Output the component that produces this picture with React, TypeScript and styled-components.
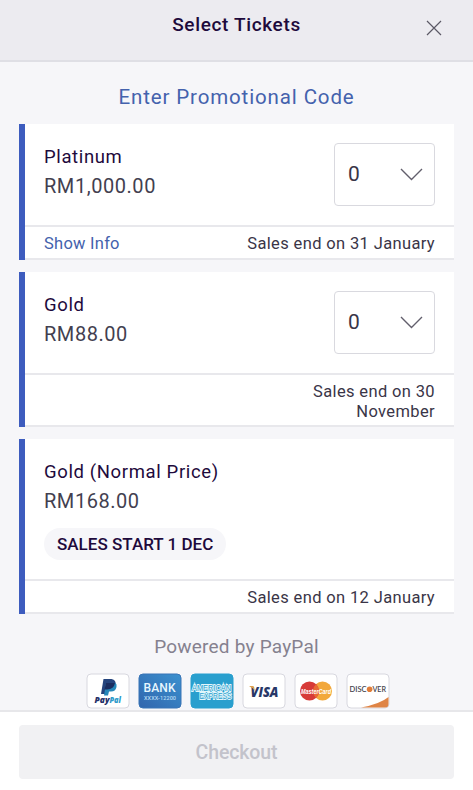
import React from "react";
import styled, { createGlobalStyle } from "styled-components";

const GlobalStyle = createGlobalStyle`
  * { box-sizing: border-box; }
  body { margin: 0; background: #f6f6f9; font-family: Roboto, "Liberation Sans", sans-serif; color: #3a3547; }
  button { font-family: inherit; border: 0; padding: 0; background: none; }
`;

const Screen = styled.div`
  width: 473px;
  height: 790px;
  display: flex;
  flex-direction: column;
  overflow: hidden;
  background: #f6f6f9;
`;

const Header = styled.header`
  height: 62px;
  flex: none;
  display: grid;
  grid-template-columns: 48px 1fr 48px;
  padding: 0 14px;
  background: #ecebf0;
  border-bottom: 2px solid #dfdfe5;
`;

const Title = styled.h1`
  margin: 0;
  text-align: center;
  font-size: 19px;
  font-weight: 500;
  line-height: 50px;
  letter-spacing: 0.65px;
  color: #1e0a3c;
`;

const CloseButton = styled.button`
  display: flex;
  justify-content: flex-end;
  padding: 20px 17px 0 0;
  grid-column: 3;
`;

const Content = styled.main`
  flex: 1;
  min-height: 0;
  padding: 0 19px;
  display: flex;
  flex-direction: column;
`;

const PromoLink = styled.button`
  height: 62px;
  padding-top: 8px;
  flex: none;
  font-size: 20.5px;
  letter-spacing: 0.87px;
  color: #4462ad;
`;

const Tickets = styled.div`
  display: flex;
  flex-direction: column;
  gap: 12px;
`;

const Card = styled.section`
  background: #fff;
  border-left: 6.5px solid #3d5cbe;
`;

const CardBody = styled.div<{ $height: number }>`
  height: ${(p) => p.$height}px;
  padding: 19px 19px 0 19px;
  display: flex;
  justify-content: space-between;
  align-items: flex-start;
`;

const Name = styled.h2`
  margin: 0;
  font-size: 18.5px;
  font-weight: 400;
  line-height: 28px;
  letter-spacing: 0.63px;
  color: #1e0a3c;
`;

const Price = styled.div`
  font-size: 20px;
  line-height: 30px;
  letter-spacing: 0.55px;
  color: #433f50;
`;

const Badge = styled.div`
  display: inline-block;
  height: 32px;
  margin-top: 12px;
  padding: 0 13px;
  border-radius: 16px;
  background: #f6f6f9;
  font-size: 17px;
  font-weight: 500;
  line-height: 33px;
  letter-spacing: 0.02px;
  color: #1e0a3c;
`;

const Quantity = styled.button`
  width: 101px;
  height: 63px;
  display: flex;
  align-items: center;
  justify-content: space-between;
  padding: 0 11px 1px 13px;
  border: 1.5px solid #d9d9df;
  border-radius: 4px;
  font-size: 21px;
  color: #3a3547;
`;

const CardFooter = styled.div<{ $height: number }>`
  height: ${(p) => p.$height}px;
  display: flex;
  justify-content: space-between;
  align-items: flex-start;
  padding: 7px 19px 0 19px;
  border-top: 2px solid #e8e8ec;
  border-bottom: 2px solid #e8e8ec;
  font-size: 16.5px;
  line-height: 20px;
  letter-spacing: 0.36px;
`;

const InfoLink = styled.a`
  letter-spacing: 0.25px;
  color: #4462ad;
`;

const SaleEnd = styled.div`
  max-width: 194px;
  margin-left: auto;
  text-align: right;
`;

const Powered = styled.p`
  margin: 0;
  padding-top: 21px;
  text-align: center;
  font-size: 19px;
  line-height: 24px;
  letter-spacing: 0.22px;
  color: #85818f;
`;

const Payments = styled.div`
  display: flex;
  justify-content: center;
  gap: 8px;
  padding: 14px 0 0 2px;
`;

const Logo = styled.svg`
  width: 44px;
  height: 36px;
  flex: none;
`;

const Footer = styled.footer`
  height: 80px;
  flex: none;
  padding: 13px 19px 0;
  background: #fff;
  border-top: 2px solid #e7e7ea;
`;

const Checkout = styled.button`
  width: 100%;
  height: 54px;
  border-radius: 4px;
  background: #f1f1f3;
  color: #c3c3cb;
  font-size: 19.5px;
  font-weight: 500;
  letter-spacing: -0.1px;
`;

const Picker = () => (
  <Quantity>
    0
    <svg width="23" height="14" viewBox="0 0 23 14" fill="none" stroke="#625f6c" strokeWidth="1.4">
      <path d="M1 2 11.5 12.5 22 2" />
    </svg>
  </Quantity>
);

interface TicketProps {
  name: string;
  price: string;
  ends: string;
  badge?: string;
  info?: boolean;
  bodyHeight: number;
  footerHeight: number;
}

const Ticket = ({ name, price, ends, badge, info, bodyHeight, footerHeight }: TicketProps) => (
  <Card>
    <CardBody $height={bodyHeight}>
      <div>
        <Name>{name}</Name>
        <Price>{price}</Price>
        {badge && <Badge>{badge}</Badge>}
      </div>
      {!badge && <Picker />}
    </CardBody>
    <CardFooter $height={footerHeight}>
      {info && <InfoLink>Show Info</InfoLink>}
      <SaleEnd>{ends}</SaleEnd>
    </CardFooter>
  </Card>
);

const tickets: TicketProps[] = [
  { name: "Platinum", price: "RM1,000.00", ends: "Sales end on 31 January", info: true, bodyHeight: 101, footerHeight: 35 },
  { name: "Gold", price: "RM88.00", ends: "Sales end on 30 November", bodyHeight: 100.5, footerHeight: 54.5 },
  { name: "Gold (Normal Price)", price: "RM168.00", ends: "Sales end on 12 January", badge: "SALES START 1 DEC", bodyHeight: 140, footerHeight: 35 },
];

const Plate = ({ fill = "#fff", stroke = "#d8d8df" }: { fill?: string; stroke?: string }) => (
  <rect x="1" y="1" width="42" height="34" rx="4" fill={fill} stroke={stroke} />
);

const PayPal = () => (
  <Logo viewBox="0 0 44 36">
    <Plate />
    <path d="M17.500 6h8q5 1 4 6-1 5-7 5h-2l-1 4h-4.500z" fill="#25447d" />
    <path d="M20 10h9.500q1.500 1 1 4-1 4.500-5.500 4.500h-2l-1 4h-4z" fill="#2687b9" />
    <path d="M20 10h9q-1 6-8 6.500h-2.500z" fill="#1b2d60" />
    <text x="8.5" y="30" fontFamily="Open Sans" fontStyle="italic" fontWeight="800" fontSize="8" textLength="15" lengthAdjust="spacingAndGlyphs" fill="#253068">Pay</text>
    <text x="23.5" y="30" fontFamily="Open Sans" fontStyle="italic" fontWeight="800" fontSize="8" textLength="11.5" lengthAdjust="spacingAndGlyphs" fill="#2c9aca">Pal</text>
  </Logo>
);

const Bank = () => (
  <Logo viewBox="0 0 44 36">
    <defs>
      <linearGradient id="bank" x1="0" y1="1" x2="1" y2="0">
        <stop stopColor="#3165ad" />
        <stop offset="1" stopColor="#3b91cf" />
      </linearGradient>
    </defs>
    <Plate fill="url(#bank)" stroke="#3874b6" />
    <text x="5.5" y="18.5" fontFamily="Roboto" fontWeight="500" fontSize="12" textLength="32" fill="#e7f7ff">BANK</text>
    <text x="6" y="27" fontFamily="Roboto" fontWeight="500" fontSize="5.5" textLength="32" fill="#b8dcf5">XXXX-12200</text>
  </Logo>
);

const Amex = () => (
  <Logo viewBox="0 0 44 36">
    <Plate fill="#299fce" stroke="#299fce" />
    <g fontFamily="Liberation Sans" fontWeight="400" fontSize="8.5" fill="#299fce" stroke="#e2f6fc" strokeWidth="1.8" paintOrder="stroke">
      <text x="2" y="17.5" textLength="39" lengthAdjust="spacingAndGlyphs">AMERICAN</text>
      <text x="9.5" y="26" textLength="32" lengthAdjust="spacingAndGlyphs">EXPRESS</text>
    </g>
  </Logo>
);

const Visa = () => (
  <Logo viewBox="0 0 44 36">
    <Plate />
    <text x="8.5" y="23.5" fontFamily="Open Sans" fontStyle="italic" fontWeight="800" fontSize="14.5" textLength="28" lengthAdjust="spacingAndGlyphs" fill="#283767">VISA</text>
    <path d="M7.500 13h4l1.500 5Q11 14.500 7.500 13.500z" fill="#dda14e" />
  </Logo>
);

const MasterCard = () => (
  <Logo viewBox="0 0 44 36">
    <Plate />
    <circle cx="28.5" cy="18" r="9.5" fill="#f2a83c" />
    <circle cx="15.5" cy="18" r="9.5" fill="#d73b38" />
    <path d="M22 11.1a9.500 9.500 0 0 1 0 13.800 9.500 9.500 0 0 1 0-13.800" fill="#e86b35" />
    <text x="7" y="20.5" fontFamily="Liberation Sans" fontStyle="italic" fontWeight="700" fontSize="6.5" textLength="30" lengthAdjust="spacingAndGlyphs" fill="#fff">MasterCard</text>
  </Logo>
);

const Discover = () => (
  <Logo viewBox="0 0 44 36">
    <Plate />
    <path d="M15 34.500Q34 31 42.500 24v7q0 3.500-3.500 3.500z" fill="#df8445" />
    <circle cx="23.6" cy="16.2" r="2.8" fill="#e07c38" />
    <g fontFamily="Lato" fontWeight="600" fontSize="8" fill="#45434b">
      <text x="3.5" y="19" textLength="17" lengthAdjust="spacingAndGlyphs">DISC</text>
      <text x="26.4" y="19" textLength="13.600" lengthAdjust="spacingAndGlyphs">VER</text>
    </g>
  </Logo>
);

export default function App() {
  return (
    <Screen>
      <GlobalStyle />
      <Header>
        <span />
        <Title>Select Tickets</Title>
        <CloseButton aria-label="Close">
          <svg width="16" height="16" viewBox="0 0 16 16" stroke="#5b5865" strokeWidth="1.2">
            <path d="M1 1 15 15M15 1 1 15" />
          </svg>
        </CloseButton>
      </Header>
      <Content>
        <PromoLink>Enter Promotional Code</PromoLink>
        <Tickets>
          {tickets.map((t) => (
            <Ticket key={t.name} {...t} />
          ))}
        </Tickets>
        <Powered>Powered by PayPal</Powered>
        <Payments>
          <PayPal />
          <Bank />
          <Amex />
          <Visa />
          <MasterCard />
          <Discover />
        </Payments>
      </Content>
      <Footer>
        <Checkout disabled>Checkout</Checkout>
      </Footer>
    </Screen>
  );
}
